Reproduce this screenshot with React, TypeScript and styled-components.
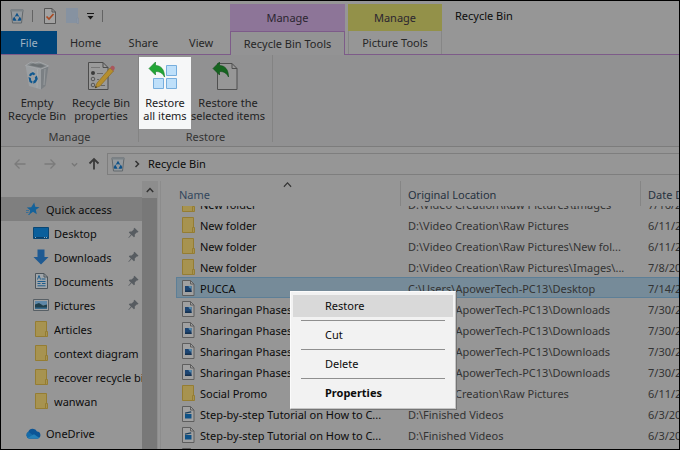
import React from 'react';
import styled, { createGlobalStyle, css } from 'styled-components';

const Global = createGlobalStyle`
  *, *::before, *::after { box-sizing: border-box; }
  body { margin: 0; background: #969696; }
  button { font: inherit; color: inherit; border: 0; background: none; padding: 0; }
  a { color: inherit; text-decoration: none; }
  svg { display: block; flex: none; }
`;

const Window = styled.div`
  position: relative;
  display: flex;
  flex-direction: column;
  height: 100vh;
  overflow: hidden;
  border: 1px solid #000;
  background: #969696;
  color: #0c0c0c;
  font: 11px/16px 'Noto Sans', 'Open Sans', sans-serif;
`;

/* ---------- header ---------- */

const Header = styled.header`
  display: flex;
  height: 54px;
`;

const purple = '#7d5b89';

const HeaderColumn = styled.div<{ $grow?: boolean }>`
  display: flex;
  flex-direction: column;
  ${p => (p.$grow ? 'flex: 1 1 0;' : 'flex: none; width: 229px;')}
  white-space: nowrap;
  border-bottom: 1px solid ${purple};
`;

const QuickToolbar = styled.div`
  display: flex;
  align-items: center;
  height: 30px;
  padding-left: 9px;
`;

const ToolButton = styled.button`
  display: flex;
  align-items: center;
  justify-content: center;
`;

const TinyButton = styled(ToolButton)<{ $space: number }>`
  margin-right: ${p => p.$space}px;
`;

const ToolDivider = styled.span`
  width: 1px;
  height: 12px;
  margin: 0 11px 0 8px;
  background: #636363;
`;

const TabRow = styled.nav`
  display: flex;
  flex: 1;
`;

const Tab = styled.button<{ $file?: boolean }>`
  width: ${p => (p.$file ? 56 : 58)}px;
  height: 23px;
  color: #262626;
  ${p =>
    p.$file &&
    css`
      background: #00457a;
      color: #9fb2c2;
    `}
`;

const ContextGroup = styled.div<{ $active?: boolean; $width: number }>`
  display: flex;
  flex-direction: column;
  width: ${p => p.$width}px;
  padding-top: 3px;
  border-bottom: 1px solid ${p => (p.$active ? 'transparent' : purple)};
`;

const ContextHead = styled.div<{ $color: string }>`
  height: 27px;
  line-height: 28px;
  text-align: center;
  background: ${p => p.$color};
  color: #2b2530;
`;

const ContextTab = styled.button<{ $active?: boolean }>`
  height: 23px;
  color: #262626;
  border: solid ${p => (p.$active ? purple : '#868686')};
  border-width: ${p => (p.$active ? '1px 1px 0' : '0 1px')};
  ${p => p.$active && 'height: 24px; margin-bottom: -1px; background: #939394;'}
`;

const Gap = styled.div`
  width: 3px;
  border-bottom: 1px solid ${purple};
`;

const Title = styled.h1`
  margin: 0;
  padding: 7px 13px;
  font-size: 11px;
  font-weight: 400;
`;

/* ---------- ribbon ---------- */

const Ribbon = styled.section`
  display: flex;
  height: 92px;
  background: #919192;
  border-bottom: 1px solid #7c7c7c;
`;

const RibbonGroup = styled.div`
  display: flex;
  flex-direction: column;
  padding-top: 2px;
  margin-bottom: 4px;
  border-right: 1px solid #838383;
`;

const RibbonButtons = styled.div<{ $before?: number; $after?: number }>`
  display: flex;
  padding-left: ${p => p.$before || 0}px;
  padding-right: ${p => p.$after || 0}px;
`;

const RibbonButton = styled.button<{ $width: number; $lit?: boolean }>`
  display: flex;
  flex-direction: column;
  align-items: center;
  width: ${p => p.$width}px;
  height: 72px;
  padding-top: 4px;
  line-height: 13px;
  white-space: nowrap;
  color: #222;
  ${p => p.$lit && 'background: #f6f7f8;'}

  span {
    margin-top: 5px;
  }
`;

const GroupLabel = styled.div`
  line-height: 16px;
  text-align: center;
  color: #343434;
`;

/* ---------- address bar ---------- */

const AddressRow = styled.div`
  display: flex;
  align-items: center;
  height: 34px;
  padding-left: 12px;
`;

const NavButton = styled.button<{ $width: number }>`
  display: flex;
  align-items: center;
  width: ${p => p.$width}px;
  height: 20px;
`;

const AddressBox = styled.div`
  display: flex;
  align-items: center;
  flex: 1;
  height: 22px;
  padding-left: 3px;
  border: 1px solid #7e7e7e;
  border-right: 0;

  svg + svg {
    margin: 0 7px 0 8px;
  }
`;

/* ---------- body ---------- */

const Body = styled.div`
  display: flex;
  flex: 1;
  min-height: 0;
`;

const Sidebar = styled.nav`
  width: 141px;
  padding-top: 16px;
  overflow: hidden;
`;

const SideItem = styled.a<{ $nested?: boolean; $selected?: boolean; $spaced?: boolean }>`
  display: flex;
  align-items: center;
  gap: 5px;
  height: 24px;
  margin-top: ${p => (p.$spaced ? 8 : 0)}px;
  padding-left: ${p => (p.$nested ? 32 : 24)}px;
  white-space: nowrap;
  ${p => p.$selected && 'background: #7f7f7f;'}
`;

const SideIcon = styled.span`
  display: flex;
  justify-content: center;
  flex: none;
  width: 16px;
`;

const SideText = styled.span`
  flex: 1;
  padding-top: 1px;
  overflow: hidden;
`;

const PinSlot = styled.span`
  margin-right: 3px;
`;

const Scrollbar = styled.div`
  display: flex;
  flex-direction: column;
  width: 16px;
  background: #8d8d8d;
`;

const ScrollUp = styled.button`
  display: flex;
  align-items: center;
  justify-content: center;
  height: 17px;
`;

const ScrollThumb = styled.div`
  flex: 1;
  margin-right: 1px;
  background: #787878;
`;

const Main = styled.main`
  flex: 1;
  min-width: 0;
  margin-left: 2px;
  padding-left: 15px;
  border-left: 1px solid #8c8c8c;
`;

const Table = styled.table`
  display: flex;
  flex-direction: column;
  height: 100%;
`;

const rowGrid = css`
  display: grid;
  grid-template-columns: 225px 240px minmax(0, 1fr);
`;

const Head = styled.thead`
  display: block;

  tr {
    ${rowGrid}
    height: 25px;
  }

  th {
    position: relative;
    padding: 6px 0 0 7px;
    text-align: left;
    font-weight: 400;
    line-height: 16px;
    white-space: nowrap;
    overflow: hidden;
    color: #26323f;
    border-right: 1px solid #858585;
  }

  th:first-child {
    padding-left: 3px;
    color: #32465c;
  }

  th:last-child {
    border-right: 0;
  }
`;

const SortMark = styled.span`
  position: absolute;
  top: -1px;
  left: 50%;
  margin-left: -5px;
`;

const Rows = styled.tbody`
  display: block;
  flex: 1;
  min-height: 0;
  overflow: hidden;

  tr:first-child {
    margin-top: -13px;
  }
`;

const Row = styled.tr<{ $selected?: boolean }>`
  ${rowGrid}
  height: 21px;
  ${p =>
    p.$selected &&
    css`
      background: #768b99;
      box-shadow: inset 0 0 0 1px #5d7f97;
    `}
`;

const Cell = styled.td`
  padding: 1px 0 0 7px;
  line-height: 21px;
  white-space: nowrap;
  overflow: hidden;
  color: #333;
`;

const NameCell = styled(Cell)`
  display: flex;
  align-items: center;
  gap: 5px;
  padding-left: 6px;
  color: #0c0c0c;
`;

/* ---------- context menu ---------- */

const Menu = styled.div`
  position: absolute;
  left: 289px;
  top: 290px;
  width: 166px;
  padding: 3px 2px 4px;
  background: #f2f2f2;
  border: 1px solid #fbfbfb;
  border-right-color: #c4c4c4;
  border-bottom-color: #c4c4c4;
  box-shadow: 1px 1px 0 #747474;
`;

const MenuItem = styled.button<{ $hover?: boolean; $strong?: boolean }>`
  display: block;
  width: 100%;
  height: 22px;
  padding-left: 32px;
  text-align: left;
  font-weight: ${p => (p.$strong ? 700 : 400)};
  ${p => p.$hover && 'background: #d9d9d9;'}
`;

const MenuRule = styled.hr`
  height: 1px;
  margin: 3px 8px;
  border: 0;
  background: #8f8f8f;
`;

/* ---------- icons ---------- */

const BinIcon = ({ size = 14 }: { size?: number }) => (
  <svg width={size} height={size + 1} viewBox="0 0 14 15">
    <path d="M1 1h12l-1.500 13h-9z" fill="#94999d" stroke="#62686c" />
    <path d="M.5.5h13v2H.500z" fill="#7b8286" />
    <path d="M7 3.800 9.200 7.600H4.800zM4.200 7.400 6.600 11.800H3.300l-.6-1.600zM9.800 7.400l1.500 2.800-.6 1.600H7.400z" fill="#0c5088" />
    <path d="M7 6.600 8.200 9H5.800z" fill="#94999d" />
  </svg>
);

const CheckPageIcon = () => (
  <svg width="12" height="16" viewBox="0 0 12 16">
    <path d="M.5.5H8l3.500 3.500v11.500H.5z" fill="#a2a2a2" stroke="#555" />
    <path d="M8 .5V4h3.500" fill="none" stroke="#555" />
    <path d="m2.500 8.500 2.500 2.500 4.500-5" fill="none" stroke="#a94a22" strokeWidth="1.700" />
  </svg>
);

const BlankFolderIcon = () => (
  <svg width="13" height="16" viewBox="0 0 13 16">
    <path d="M0 0h12v15H0z" fill="#8692a1" />
    <path d="M11 10h1.500v5.500H11z" fill="#8e9aab" stroke="#7d8999" strokeWidth=".5" />
  </svg>
);

const BarDropIcon = () => (
  <svg width="7" height="7" viewBox="0 0 7 7">
    <path d="M0 0h7v1H0zM.5 3h6l-3 3.500z" fill="#161616" />
  </svg>
);

const BigBinIcon = () => (
  <svg width="26" height="30" viewBox="0 0 26 30">
    <path d="M1.500 4.500 17 8v20.500L5 25z" fill="#9b9fa2" />
    <path d="m17 8 7.500-3-3 20L17 28.500z" fill="#7b8084" />
    <path d="M1.500 4.500 7 1l4 1 4-1 4 1.500L24.500 5 17 8z" fill="#858a8d" stroke="#a9acae" strokeWidth=".8" />
    <path d="m5 4.300 4-1.800 4 1 4-.5 4 2-4 1.600z" fill="#6c7174" />
    <path d="m9 9 1 5M13.500 8l-.5 19M21 8l-1 16" stroke="#adb0b2" strokeWidth=".6" />
    <path d="m6 12.500 3-1.500 2.500 2-1.800 1.300-1.500-.8-1.300 1.700-2-.7zM4.500 16l2.400 1 .2 2.500 1.400.8-.4 2.200-2.600-1.500zM12.800 14.500l1 3.500-2 3.500-2.500 1.200v-2.400l2-2-.5-2z" fill="#10588f" />
  </svg>
);

const PropertiesIcon = () => (
  <svg width="28" height="30" viewBox="0 0 28 30">
    <path d="M1.500 1.500H16l5 5v22H1.500z" fill="#9a9a9a" stroke="#4c4c4c" />
    <path d="M16 1.500v5h5" fill="none" stroke="#4c4c4c" />
    <path d="M4 6.500h9" stroke="#777" />
    <circle cx="6" cy="12" r="2" fill="#3b3b3b" />
    <circle cx="6" cy="18" r="1.800" fill="none" stroke="#555" />
    <circle cx="6" cy="24" r="1.800" fill="none" stroke="#555" />
    <path d="M10 12.500h6M10 18.500h2M14 24.500h4" stroke="#666" />
    <path d="m8 27 2-5L23 7l3.500 3L13 25z" fill="#b58e2e" stroke="#86661b" strokeWidth=".6" />
    <path d="m23 7 1.500-2c2-1 4 1 3 3l-1 2z" fill="#a9565c" />
    <path d="m8 27 .8-2 1.300 1.200z" fill="#222" />
  </svg>
);

const arrowPath = 'M0 6.500 6.500 0v3.500C12 3.500 15.500 7.500 15.500 15c-2-4-4.500-5.500-9-5.500V13z';

const RestoreAllIcon = () => (
  <svg width="34" height="30" viewBox="0 0 34 30">
    <g fill="#bfe0fa" stroke="#77aedd">
      <path d="M18.500 4.500h10v10h-10zM5.500 17.500h10v10h-10zM18.500 17.500h10v10h-10z" />
    </g>
    <path d={arrowPath} transform="translate(1 1)" fill="#22a636" stroke="#137a25" strokeWidth=".6" />
  </svg>
);

const RestoreSelectedIcon = () => (
  <svg width="32" height="30" viewBox="0 0 32 30">
    <path d="M5.500 2.500H20l5 5v21H5.500z" fill="#979797" stroke="#4f4f4f" />
    <path d="M20 2.500v5h5" fill="none" stroke="#4f4f4f" />
    <path d={arrowPath} transform="translate(1 1)" fill="#15651f" stroke="#0e4a17" strokeWidth=".6" />
  </svg>
);

const ArrowIcon = ({ dir }: { dir: 'left' | 'right' | 'up' }) => (
  <svg width="14" height="14" viewBox="0 0 14 14">
    <path
      d="M12.500 7H2M6.500 2.500 2 7l4.500 4.500"
      fill="none"
      stroke={dir === 'up' ? '#3a3a3a' : '#7b7b7b'}
      strokeWidth={dir === 'up' ? 1.8 : 1.3}
      transform={dir === 'up' ? 'rotate(90 7 7)' : dir === 'right' ? 'rotate(180 7 7)' : undefined}
    />
  </svg>
);

type ChevronProps = { dir: 'up' | 'down' | 'right'; color?: string; size?: number; weight?: number };

const chevronPaths = {
  up: 'M.8 6 4 2.500 7.200 6',
  down: 'M1 2.500 4 5.500 7 2.500',
  right: 'M2.500 1 5.500 4 2.500 7',
};

const Chevron = ({ dir, color = '#333', size = 8, weight = 1.5 }: ChevronProps) => (
  <svg width={size} height={size} viewBox="0 0 8 8">
    <path d={chevronPaths[dir]} fill="none" stroke={color} strokeWidth={weight} />
  </svg>
);

const StarIcon = () => (
  <svg width="14" height="14" viewBox="0 0 14 14">
    <path d="m8.200.5 1 4.300 4.300.4-3.700 2.600 1 4.400-3.800-2.500L3 12.700l1.200-4.400L.8 5.600l4.400-.4z" fill="#15629a" />
    <path d="M0 8.500h3M0 10.500h2.500M2 12.500h2" stroke="#2a6b9b" strokeWidth=".8" />
  </svg>
);

const DesktopIcon = () => (
  <svg width="16" height="12" viewBox="0 0 16 12">
    <path d="M.5.500h15v11H.500z" fill="#0a5f9c" stroke="#0a4673" />
    <path d="M1 10.500h14" stroke="#0b3f69" />
    <path d="M2 10.500h1M11 10.500h1M13 10.500h1" stroke="#8fb0c6" />
  </svg>
);

const DownloadIcon = () => (
  <svg width="16" height="16" viewBox="0 0 16 16">
    <path d="M4.500.5h7V8h4L8 15.500.5 8h4z" fill="#1f5a92" />
  </svg>
);

const DocumentIcon = () => (
  <svg width="13" height="16" viewBox="0 0 13 16">
    <path d="M.5.5H9l3.500 3.500v11.500H.5z" fill="#a0a5a9" stroke="#4c545a" />
    <path d="M9 .5V4h3.500" fill="none" stroke="#4c545a" />
    <path d="m2.500 6.500 1.500-4 1.500 4M6.500 6h4M2.500 8.500h8M2.500 10.500h3M7 10.500h3.500M2.500 12.800h8" stroke="#1c5c8c" fill="none" />
  </svg>
);

const PictureIcon = () => (
  <svg width="16" height="12" viewBox="0 0 16 12">
    <path d="M.5.5h15v11H.5z" fill="#a2a2a2" stroke="#575f65" />
    <path d="M2 2h12v4H2z" fill="#5f88a8" />
    <path d="M2 5.500 6 4l4 2.500 4-1V10H2z" fill="#1f3f4c" />
    <path d="M2 8.500h12V10H2z" fill="#376a8c" />
  </svg>
);

const FolderIcon = () => (
  <svg width="13" height="16" viewBox="0 0 13 16">
    <path d="M.5.5h11v15H.5z" fill="#a79350" stroke="#957d32" />
    <path d="M10.500 10.500h2v5h-2z" fill="#a79350" stroke="#957d32" />
  </svg>
);

const CloudIcon = () => (
  <svg width="16" height="11" viewBox="0 0 16 11">
    <path d="M4 10.500A3.700 3.700 0 0 1 3.300 3.800 4.700 4.700 0 0 1 12 3.500 3.600 3.600 0 0 1 13 10.500z" fill="#0c5596" />
    <path d="M3.300 3.800 13 10.500H4A3.700 3.700 0 0 1 3.300 3.800z" fill="#166ba8" />
    <path d="M2.500 10 9 6.200 14.500 10l-1.500.5H4z" fill="#2480b8" />
  </svg>
);

const PinIcon = () => (
  <svg width="11" height="12" viewBox="0 0 11 12">
    <path d="m6.500.8 4 4-1 .8-.8-.2-2 2.200.2 1.800-1 .8-2.200-2.200L.8 11l-.5-.3 2.600-3.300L.8 5.400l.9-1 1.900.2 2.200-2-.2-.9z" fill="#575c61" />
  </svg>
);

const FileIcon = ({ video }: { video?: boolean }) => (
  <svg width="13" height="16" viewBox="0 0 13 16">
    <path d="M.5.5h8L12 4v11.500H.5z" fill="#a1a1a1" stroke="#5e5e5e" />
    <path d="M8.500.5V4H12" fill="none" stroke="#5e5e5e" />
    {video ? (
      <>
        <path d="M3 8h6.500v4.500H3z" fill="#0e5186" />
        <path d="m3 6.500 6-1.300.4 1.300L3 7.800z" fill="#1a3e5b" />
      </>
    ) : (
      <>
        <path d="M3 6h6.500v6H3z" fill="#1d4471" />
        <path d="M6.500 6h3v3L7 7.500z" fill="#4f87ad" />
        <path d="M3 10.500h6.500V12H3z" fill="#14304f" />
      </>
    )}
  </svg>
);

/* ---------- data ---------- */

type Kind = 'folder' | 'image' | 'video';
type Item = { kind: Kind; name: string; location: string; date: string; selected?: boolean };

const downloads = 'C:\\Users\\ApowerTech-PC13\\Downloads';
const pictures = 'D:\\Video Creation\\Raw Pictures';

const items: Item[] = [
  { kind: 'folder', name: 'New folder', location: pictures + '\\Images', date: '7/16/2020' },
  { kind: 'folder', name: 'New folder', location: pictures, date: '6/11/2020' },
  { kind: 'folder', name: 'New folder', location: pictures + '\\New fol...', date: '6/11/2020' },
  { kind: 'folder', name: 'New folder', location: pictures + '\\Images\\...', date: '7/8/2020' },
  { kind: 'image', name: 'PUCCA', location: 'C:\\Users\\ApowerTech-PC13\\Desktop', date: '7/14/2020', selected: true },
  { kind: 'image', name: 'Sharingan Phases', location: downloads, date: '7/30/2020' },
  { kind: 'image', name: 'Sharingan Phases', location: downloads, date: '7/30/2020' },
  { kind: 'image', name: 'Sharingan Phases', location: downloads, date: '7/30/2020' },
  { kind: 'image', name: 'Sharingan Phases', location: downloads, date: '7/30/2020' },
  { kind: 'folder', name: 'Social Promo', location: pictures, date: '6/11/2020' },
  { kind: 'video', name: 'Step-by-step Tutorial on How to C...', location: 'D:\\Finished Videos', date: '6/3/2020' },
  { kind: 'video', name: 'Step-by-step Tutorial on How to C...', location: 'D:\\Finished Videos', date: '6/3/2020' },
  { kind: 'video', name: '', location: '', date: '' },
];

const places = [
  { name: 'Desktop', icon: <DesktopIcon />, pinned: true },
  { name: 'Downloads', icon: <DownloadIcon />, pinned: true },
  { name: 'Documents', icon: <DocumentIcon />, pinned: true },
  { name: 'Pictures', icon: <PictureIcon />, pinned: true },
  { name: 'Articles', icon: <FolderIcon /> },
  { name: 'context diagram', icon: <FolderIcon /> },
  { name: 'recover recycle bin', icon: <FolderIcon /> },
  { name: 'wanwan', icon: <FolderIcon /> },
];

export default function App() {
  return (
    <Window>
      <Global />
      <Header>
        <HeaderColumn>
          <QuickToolbar>
            <ToolButton aria-label="Recycle Bin"><BinIcon /></ToolButton>
            <ToolDivider />
            <TinyButton $space={10} aria-label="Properties"><CheckPageIcon /></TinyButton>
            <TinyButton $space={8} aria-label="New folder"><BlankFolderIcon /></TinyButton>
            <ToolButton aria-label="Customize toolbar"><BarDropIcon /></ToolButton>
            <ToolDivider />
          </QuickToolbar>
          <TabRow>
            <Tab $file>File</Tab>
            <Tab>Home</Tab>
            <Tab>Share</Tab>
            <Tab>View</Tab>
          </TabRow>
        </HeaderColumn>
        <ContextGroup $active $width={115}>
          <ContextHead $color="#8d7598">Manage</ContextHead>
          <ContextTab $active>Recycle Bin Tools</ContextTab>
        </ContextGroup>
        <Gap />
        <ContextGroup $width={94}>
          <ContextHead $color="#939149">Manage</ContextHead>
          <ContextTab>Picture Tools</ContextTab>
        </ContextGroup>
        <HeaderColumn $grow>
          <Title>Recycle Bin</Title>
        </HeaderColumn>
      </Header>

      <Ribbon>
        <RibbonGroup>
          <RibbonButtons $before={6} $after={3}>
            <RibbonButton $width={60}><BigBinIcon /><span>Empty<br />Recycle Bin</span></RibbonButton>
            <RibbonButton $width={68}><PropertiesIcon /><span>Recycle Bin<br />properties</span></RibbonButton>
          </RibbonButtons>
          <GroupLabel>Manage</GroupLabel>
        </RibbonGroup>
        <RibbonGroup>
          <RibbonButtons $after={7}>
            <RibbonButton $width={52} $lit><RestoreAllIcon /><span>Restore<br />all items</span></RibbonButton>
            <RibbonButton $width={74}><RestoreSelectedIcon /><span>Restore the<br />selected items</span></RibbonButton>
          </RibbonButtons>
          <GroupLabel>Restore</GroupLabel>
        </RibbonGroup>
      </Ribbon>

      <AddressRow>
        <NavButton $width={30} aria-label="Back"><ArrowIcon dir="left" /></NavButton>
        <NavButton $width={28} aria-label="Forward"><ArrowIcon dir="right" /></NavButton>
        <NavButton $width={16} aria-label="Recent locations"><Chevron dir="down" color="#777" size={7} /></NavButton>
        <NavButton $width={20} aria-label="Up"><ArrowIcon dir="up" /></NavButton>
        <AddressBox>
          <BinIcon size={14} />
          <Chevron dir="right" size={8} />
          Recycle Bin
        </AddressBox>
      </AddressRow>

      <Body>
        <Sidebar>
          <SideItem href="#quick-access" $selected>
            <SideIcon><StarIcon /></SideIcon>
            <SideText>Quick access</SideText>
          </SideItem>
          {places.map(place => (
            <SideItem key={place.name} href="#place" $nested>
              <SideIcon>{place.icon}</SideIcon>
              <SideText>{place.name}</SideText>
              {place.pinned && <PinSlot><PinIcon /></PinSlot>}
            </SideItem>
          ))}
          <SideItem href="#onedrive" $spaced>
            <SideIcon><CloudIcon /></SideIcon>
            <SideText>OneDrive</SideText>
          </SideItem>
        </Sidebar>
        <Scrollbar>
          <ScrollUp aria-label="Scroll up"><Chevron dir="up" /></ScrollUp>
          <ScrollThumb />
        </Scrollbar>
        <Main>
          <Table cellSpacing={0}>
            <Head>
              <tr>
                <th>Name<SortMark><Chevron dir="up" size={9} weight={1} /></SortMark></th>
                <th>Original Location</th>
                <th>Date Deleted</th>
              </tr>
            </Head>
            <Rows>
              {items.map((item, i) => (
                <Row key={i} $selected={item.selected}>
                  <NameCell>
                    {item.kind === 'folder' ? <FolderIcon /> : <FileIcon video={item.kind === 'video'} />}
                    {item.name}
                  </NameCell>
                  <Cell>{item.location}</Cell>
                  <Cell>{item.date}</Cell>
                </Row>
              ))}
            </Rows>
          </Table>
        </Main>
      </Body>

      <Menu role="menu">
        <MenuItem role="menuitem" $hover>Restore</MenuItem>
        <MenuRule />
        <MenuItem role="menuitem">Cut</MenuItem>
        <MenuRule />
        <MenuItem role="menuitem">Delete</MenuItem>
        <MenuRule />
        <MenuItem role="menuitem" $strong>Properties</MenuItem>
      </Menu>
    </Window>
  );
}
